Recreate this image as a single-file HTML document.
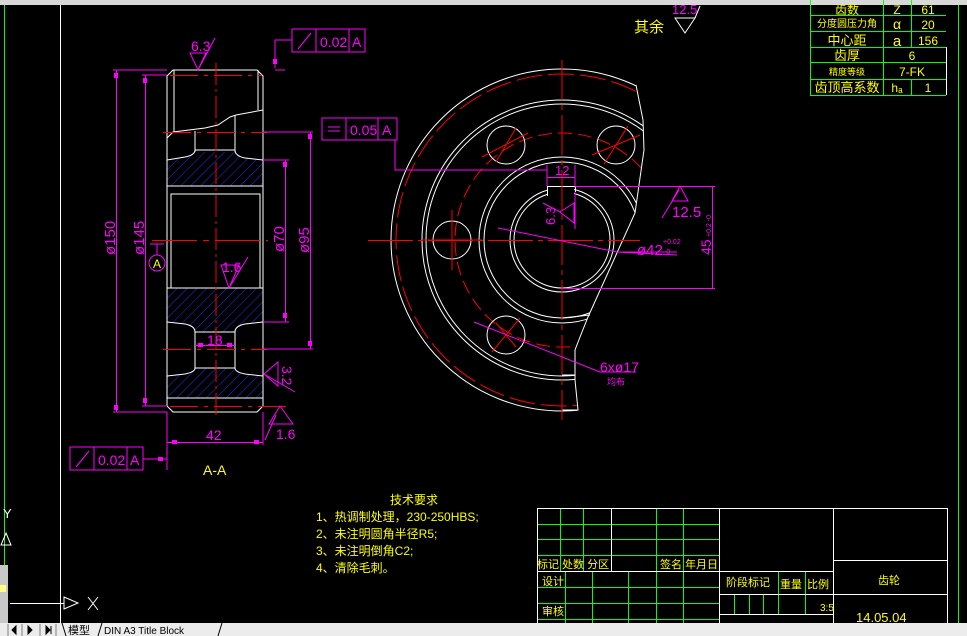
<!DOCTYPE html>
<html><head><meta charset="utf-8"><style>
html,body{margin:0;padding:0;background:#000;width:967px;height:636px;overflow:hidden}
svg{display:block}
text{font-family:"Liberation Sans","Noto Sans CJK SC",sans-serif}
.y{fill:#ffff00}.m{fill:#ff00ff}
</style></head><body>
<svg width="967" height="636" viewBox="0 0 967 636" xmlns="http://www.w3.org/2000/svg">
<defs>
<pattern id="h" width="7" height="7" patternUnits="userSpaceOnUse" patternTransform="rotate(45)">
<rect width="7" height="7" fill="#000"/><line x1="0" y1="0" x2="0" y2="7" stroke="#2030ff" stroke-width="1"/>
</pattern>
<clipPath id="cut"><path d="M562 60 L636 60 L636 85 L643 120 L644 150 L635 213 L588 317 L580 337 L575 350 L575 380 L578 420 L300 420 L300 60Z"/></clipPath>
</defs>
<rect x="0" y="0" width="967" height="5" fill="#d8d8d8"/>
<line x1="4.5" y1="5" x2="4.5" y2="565" stroke="#00ff00"/>
<line x1="60.5" y1="5" x2="60.5" y2="623" stroke="#fff"/>
<line x1="958.5" y1="5" x2="958.5" y2="623" stroke="#00ff00"/>

<g fill="url(#h)" stroke="none">
<path d="M167 160 L185 157 Q195 155 195 152 L235 152 Q235 156 245 158 L263 160 L263 186 L167 186Z"/>
<path d="M167 288 L263 288 L263 322 L245 324 Q235 326 235 332 L195 332 Q195 326 185 324 L167 322Z"/>
<path d="M167 376 L185 374 Q195 372 195 368 L235 368 Q235 372 245 374 L263 376 L263 398 L167 398Z"/>
</g>
<g stroke="#fff" fill="none" stroke-width="1">
<path d="M173 70 L257 70 L263 76 L263 406 L257 412 L173 412 L167 406 L167 76Z"/>
<path d="M174 70 L174 132 M258 70 L258 110"/>
<path d="M167 138 L173 132 L205 128 L218 125 L230 117 L236 115 L263 110"/>
<path d="M195 131 L195 152 M235 115 L235 152 M195 150 L235 150"/>
<path d="M167 160 L185 157 Q195 155 195 150 M263 160 L245 158 Q235 156 235 150"/>
<line x1="167" y1="186" x2="263" y2="186"/>
<rect x="171" y="194" width="89" height="94"/>
<line x1="167" y1="288" x2="263" y2="288"/>
<path d="M167 322 L185 324 Q195 326 195 332 L235 332 Q235 326 245 324 L263 322"/>
<path d="M195 332 L195 368 M235 332 L235 368"/>
<path d="M167 376 L185 374 Q195 372 195 368 L235 368 Q235 372 245 374 L263 376"/>
<line x1="167" y1="398" x2="263" y2="398"/>
</g>
<g stroke="#ff0000" stroke-width="1">
<line x1="216" y1="63" x2="216" y2="418" stroke-dasharray="22 4 3 4"/>
<line x1="170" y1="75.5" x2="262" y2="75.5" stroke-dasharray="28 6 4 6"/>
<line x1="163" y1="132.5" x2="267" y2="132.5" stroke-dasharray="28 6 4 6"/>
<line x1="152" y1="240.5" x2="268" y2="240.5" stroke-dasharray="45 6 6 6"/>
<line x1="163" y1="349.5" x2="267" y2="349.5" stroke-dasharray="28 6 4 6"/>
<line x1="170" y1="406.5" x2="292" y2="406.5" stroke-dasharray="28 6 4 6"/>
</g>
<g stroke="#ff00ff" fill="none" stroke-width="1">
<path d="M113 70 L167 70 M113 412 L167 412 M116.5 70 L116.5 412"/>
<path d="M142 75 L167 75 M142 406 L167 406 M145.5 75 L145.5 406"/>
<path d="M263 160 L289 160 M263 322 L289 322 M285.5 160 L285.5 322"/>
<path d="M263 132 L313 132 M263 349 L313 349 M310.5 132 L310.5 349"/>
<path d="M195 345.5 L235 345.5"/>
<path d="M167 412 L167 470 M263 412 L263 445 M167 442.5 L263 442.5"/>
<circle cx="157" cy="263" r="8"/><path d="M157 255 L157 244 M150 244 L164 244"/>
<path d="M190 53 L206 53 L198 70 Z M198 70 L215 38"/>
<path d="M221 265 L239 265 L229 288 Z M229 288 L248 257"/>
<path d="M292 40 L275 40 L275 68 M275 70 L285 70"/>
<rect x="292" y="29" width="73" height="23"/><path d="M316 29 L316 52 M349 29 L349 52 M298 49 L311 33"/>
<rect x="70" y="447" width="73" height="23"/><path d="M94 447 L94 470 M127 447 L127 470 M76 467 L89 451 M143 459 L167 459"/>
<path d="M264 374 L278 362 L278 386 Z M264 374 L295 392"/>
<path d="M280 406 L293 424 L269 424 Z M265 440 L276 415"/>
</g>
<g fill="#ff00ff">
<rect x="114" y="73" width="4" height="5"/><rect x="114" y="405" width="4" height="5"/>
<rect x="143" y="78" width="4" height="5"/><rect x="143" y="398" width="4" height="5"/>
<rect x="283" y="162" width="4" height="5"/><rect x="283" y="313" width="4" height="5"/>
<rect x="308" y="134" width="4" height="5"/><rect x="308" y="341" width="4" height="5"/>
<rect x="172" y="440" width="5" height="4"/><rect x="254" y="440" width="5" height="4"/>
<rect x="198" y="343" width="5" height="4"/><rect x="227" y="343" width="5" height="4"/>
<rect x="273" y="59" width="4" height="5"/><rect x="158" y="457" width="5" height="4"/>
</g>
<g class="m" font-size="15">
<text transform="translate(115,255) rotate(-90)">ø150</text>
<text transform="translate(144,255) rotate(-90)">ø145</text>
<text transform="translate(284,252) rotate(-90)">ø70</text>
<text transform="translate(309,253) rotate(-90)">ø95</text>
<text x="191" y="51" font-size="14">6.3</text>
<text x="222" y="272" font-size="14">1.6</text>
<text x="207" y="345" font-size="14">18</text>
<text x="206" y="440" font-size="14">42</text>
<text transform="translate(282,366) rotate(90)" font-size="14">3.2</text>
<text x="276" y="439" font-size="14">1.6</text>
<text x="320" y="47" font-size="14">0.02</text><text x="352" y="47" font-size="14">A</text>
<text x="98" y="465" font-size="14">0.02</text><text x="130" y="465" font-size="14">A</text>
</g>
<text x="153" y="268" font-size="12" class="y">A</text>
<text x="203" y="475" font-size="14" class="y">A-A</text>

<g clip-path="url(#cut)" fill="none" stroke="#fff">
<circle cx="562" cy="240" r="171"/>
<circle cx="562" cy="240" r="140"/>
<circle cx="562" cy="240" r="136"/>
<circle cx="562" cy="240" r="83"/>
<circle cx="562" cy="240" r="78"/>
<circle cx="562" cy="240" r="166" stroke="#ff0000" stroke-dasharray="26 6"/>
<circle cx="562" cy="240" r="107" stroke="#ff0000" stroke-dasharray="14 6"/>
</g>
<path d="M636 85 L643 120 L644 150 L635 213 L588 317 L580 337 L575 350 L575 380 L578 410 L562 410" fill="none" stroke="#fff"/>
<path d="M562 375 L575 375 M562 318 L590 315" stroke="#fff"/>
<g fill="none" stroke="#fff">
<circle cx="562" cy="240" r="52"/><circle cx="562" cy="240" r="48"/>
<circle cx="452" cy="240" r="19"/><circle cx="506" cy="145" r="19"/><circle cx="616" cy="145" r="19"/><circle cx="506" cy="335" r="19"/>
</g>
<rect x="548" y="185" width="26" height="14" fill="#000"/>
<path d="M547.5 196 L547.5 186.5 L575.5 186.5 L575.5 192" stroke="#fff" fill="none"/>
<g stroke="#ff0000">
<line x1="562" y1="60" x2="562" y2="420" stroke-dasharray="40 5 5 5"/>
<line x1="368" y1="240.5" x2="640" y2="240.5" stroke-dasharray="45 5 5 5"/>
<path d="M422 240 H482 M452 210 V270 M482 157 L528 133 M516 128 L496 162 M640 135 L592 155 M628 126 L604 164 M492 352 L520 318 M496 323 L516 347"/>
</g>
<g stroke="#ff00ff" fill="none">
<rect x="322" y="118" width="75" height="22"/><path d="M346 118 L346 140 M378 118 L378 140 M328 127 L340 127 M328 131 L340 131"/>
<path d="M395 140 L395 170 L547 170"/>
<path d="M547 165 L547 186 M575 165 L575 186 M547 177.5 L575 177.5"/>
<path d="M575 186.5 L715 186.5 M562 288.5 L715 288.5 M712.5 186 L712.5 288"/>
<path d="M498 228 L617 252 L677 255 M620 252 L677 252"/>
<path d="M474 322 L600 372 L636 372"/>
<path d="M680 186 L688 201 L672 201 Z M662 218 L679 190"/>
<path d="M560 212 L574 203 L574 223 Z M543 203 L560 212 M575 192 L575 229"/>
</g>
<g class="m">
<text x="350" y="135" font-size="14">0.05</text><text x="382" y="135" font-size="14">A</text>
<text x="555" y="175" font-size="13">12</text>
<text x="672" y="217" font-size="15">12.5</text>
<text transform="translate(711,255) rotate(-90)" font-size="14">45</text>
<text transform="translate(711,237) rotate(-90)" font-size="7">+0.2 -0</text>
<text x="637" y="255" font-size="15">ø42</text>
<text x="663" y="244" font-size="7">+0.02</text><text x="664" y="254" font-size="7">-0</text>
<text transform="translate(555,225) rotate(-90)" font-size="13">6.3</text>
<text x="600" y="372" font-size="14">6xø17</text>
<text x="607" y="385" font-size="9">均布</text>
</g>

<text x="634" y="32" font-size="15" class="y">其余</text>
<text x="672" y="14" font-size="13" class="m">12.5</text>
<path d="M675 18 L695 18 L685 33 Z M695 18 L700 6" stroke="#fff" fill="none"/>
<g stroke="#00ff00" fill="none">
<path d="M810.5 0 V95 M883.5 0 V95 M911.5 0 V47 M911.5 79 V95 M810 15.5 H946 M810 31.5 H946 M810 47.5 H946 M810 62.5 H946 M810 79.5 H946 M810 95.5 H946"/>
</g>
<path d="M946.5 47 V95" stroke="#fff"/>
<g class="y" font-size="12" text-anchor="middle">
<text x="847" y="14">齿数</text><text x="897" y="14">Z</text><text x="928" y="14">61</text>
<text x="847" y="27" font-size="10">分度圆压力角</text><text x="897" y="29" font-size="14">α</text><text x="928" y="29">20</text>
<text x="847" y="45" font-size="13">中心距</text><text x="897" y="46" font-size="15">a</text><text x="928" y="45">156</text>
<text x="847" y="60" font-size="13">齿厚</text><text x="912" y="60">6</text>
<text x="847" y="75" font-size="9">精度等级</text><text x="912" y="76">7-FK</text>
<text x="847" y="92" font-size="13">齿顶高系数</text><text x="897" y="92">hₐ</text><text x="928" y="92">1</text>
</g>

<g class="y" font-size="12">
<text x="390" y="504">技术要求</text>
<text x="316" y="521">1、热调制处理，230-250HBS;</text>
<text x="316" y="538">2、未注明圆角半径R5;</text>
<text x="316" y="555">3、未注明倒角C2;</text>
<text x="316" y="572">4、清除毛刺。</text>
</g>

<g stroke="#00ff00" fill="none">
<path d="M537 524.5 H719 M537 539.5 H719 M537 555.5 H719 M537 587.5 H719 M537 603.5 H719 M537 619.5 H719"/>
<path d="M560.5 508 V571 M583.5 508 V571 M656.5 508 V624 M683.5 508 V624 M565.5 571 V624 M592.5 571 V624 M628.5 571 V624"/>
<path d="M734.5 594 V614 M749.5 594 V614 M763.5 594 V614 M778.5 571 V614 M805.5 571 V614"/>
</g>
<g stroke="#fff" fill="none">
<path d="M537.5 508.5 H947.5 V623 M537.5 508 V624 M719.5 508 V624 M833.5 508 V624 M611.5 508 V571 M537 571.5 H833 M719 594.5 H947 M719 614.5 H833 M833 560.5 H947"/>
</g>
<g class="y" font-size="11">
<text x="537" y="568">标记 处数 分区</text>
<text x="660" y="568">签名 年月日</text>
<text x="542" y="585">设计</text>
<text x="542" y="615">审核</text>
<text x="726" y="586">阶段标记</text>
<text x="780" y="588">重量</text>
<text x="807" y="588">比例</text>
<text x="878" y="584">齿轮</text>
<text x="820" y="611" font-size="10">3:5</text>
<text x="856" y="622" font-size="13">14.05.04</text>
</g>

<text x="3" y="518" font-size="13" fill="#fff">Y</text>
<path d="M6 533 L11 545 L1 545 Z M10 603.5 H64 M64 597 L78 603 L64 609 Z M88 597 L98 610 M98 597 L88 610" stroke="#fff" fill="none"/>
<rect x="0" y="565" width="8" height="59" fill="#c8c8c8"/>
<rect x="0" y="585" width="6" height="7" fill="#ffff88"/>

<rect x="0" y="623" width="967" height="13" fill="#ececec"/>
<g stroke="#808080"><path d="M8 624 V636 M22 624 V636 M40 624 V636 M56 624 V636"/></g>
<path d="M16 626 L12 630 L16 634Z M28 626 L32 630 L28 634Z M46 626 L50 630 L46 634 Z M51 626 V634" fill="#000" stroke="#000"/>
<path d="M62 623 L66 636 M98 636 L102 623 M218 636 L222 623" stroke="#000"/>
<text x="68" y="634" font-size="11" fill="#000">模型</text>
<text x="104" y="634" font-size="10" fill="#000" font-family="Liberation Mono">DIN A3 Title Block</text>
</svg>
</body></html>
